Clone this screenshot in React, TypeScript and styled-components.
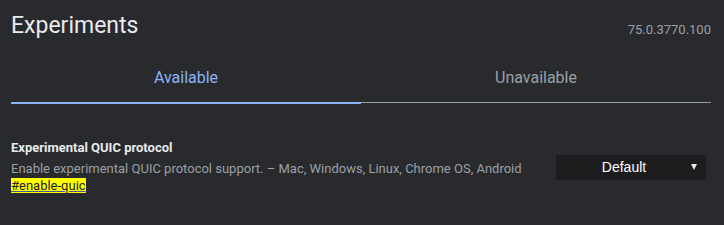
import styled, { createGlobalStyle } from "styled-components";

const GlobalStyle = createGlobalStyle`
  html, body {
    margin: 0;
    padding: 0;
    background: #292a2d;
  }
  body {
    font-family: Roboto, "Noto Sans", sans-serif;
  }
`;

const Page = styled.div`
  width: 724px;
  height: 225px;
  box-sizing: border-box;
  padding: 7px 13px 0 11px;
  background: #292a2d;
  overflow: hidden;
`;

const Header = styled.header`
  display: flex;
  justify-content: space-between;
  align-items: flex-end;
  height: 38px;
`;

const Title = styled.h1`
  margin: 0;
  font-size: 23px;
  font-weight: 400;
  line-height: 38px;
  color: #e8eaed;
`;

const Version = styled.span`
  font-size: 13px;
  color: #9aa0a6;
  line-height: 14px;
  padding-bottom: 8px;
`;

const TabList = styled.div`
  display: flex;
  margin-top: 23px;
`;

const Tab = styled.div<{ $active?: boolean }>`
  flex: 1;
  text-align: center;
  font-size: 16px;
  line-height: 20px;
  padding-bottom: 14px;
  color: ${(p) => (p.$active ? "#8ab4f8" : "#9aa0a6")};
  border-bottom: ${(p) => (p.$active ? "2px solid #8ab4f8" : "1px solid #9aa0a6")};
  margin-bottom: ${(p) => (p.$active ? "0" : "1px")};
`;

const Flag = styled.div`
  display: flex;
  align-items: center;
  justify-content: space-between;
  margin-top: 36px;
`;

const FlagText = styled.div`
  display: flex;
  flex-direction: column;
`;

const FlagName = styled.div`
  font-size: 13px;
  font-weight: 700;
  color: #e8eaed;
  line-height: 16px;
`;

const FlagDesc = styled.div`
  font-size: 13px;
  color: #9aa0a6;
  line-height: 16px;
  margin-top: 5px;
`;

const FlagLink = styled.a`
  align-self: flex-start;
  font-size: 13px;
  line-height: 15px;
  color: #202124;
  background: #ffff00;
  text-decoration: underline;
  text-decoration-color: #3c5a9a;
  margin-top: 1px;
`;

const SelectBox = styled.div`
  position: relative;
  box-sizing: border-box;
  width: 150px;
  height: 25px;
  margin-right: 5px;
  margin-top: 1px;
  padding-right: 14px;
  background: #1d1d1f;
  color: #ffffff;
  font-family: "Liberation Sans", Arial, sans-serif;
  font-size: 14px;
  display: flex;
  align-items: center;
  justify-content: center;
`;

const Arrow = styled.span`
  position: absolute;
  right: 9px;
  top: 9px;
  width: 0;
  height: 0;
  border-left: 3px solid transparent;
  border-right: 3px solid transparent;
  border-top: 6px solid #e8eaed;
`;

export default function App() {
  return (
    <>
      <GlobalStyle />
      <Page>
        <Header>
          <Title>Experiments</Title>
          <Version>75.0.3770.100</Version>
        </Header>
        <TabList>
          <Tab $active>Available</Tab>
          <Tab>Unavailable</Tab>
        </TabList>
        <Flag>
          <FlagText>
            <FlagName>Experimental QUIC protocol</FlagName>
            <FlagDesc>
              Enable experimental QUIC protocol support. – Mac, Windows, Linux, Chrome OS, Android
            </FlagDesc>
            <FlagLink href="#enable-quic">#enable-quic</FlagLink>
          </FlagText>
          <SelectBox>
            Default
            <Arrow />
          </SelectBox>
        </Flag>
      </Page>
    </>
  );
}
